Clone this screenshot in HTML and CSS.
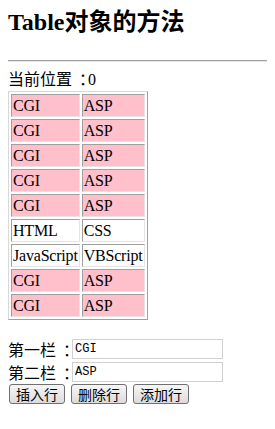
FILE: index.html
```html
<!DOCTYPE html>
<html lang="zh-CN">

<head>
    <meta charset="UTF-8">
    <meta name="viewport" content="width=device-width, initial-scale=1.0">
    <title>Table对象的方法</title>
    <link rel="stylesheet" href="styles.css">
</head>

<body>
    <h2 class="title">Table对象的方法</h2>
    <hr class="line">
    <div class="pos">当前位置<span class="colon">：</span>0</div>
    <table class="list" id="list">
        <tr class="pink"><td>CGI</td><td>ASP</td></tr>
        <tr class="pink"><td>CGI</td><td>ASP</td></tr>
        <tr class="pink"><td>CGI</td><td>ASP</td></tr>
        <tr class="pink"><td>CGI</td><td>ASP</td></tr>
        <tr class="pink"><td>CGI</td><td>ASP</td></tr>
        <tr><td>HTML</td><td>CSS</td></tr>
        <tr><td>JavaScript</td><td>VBScript</td></tr>
        <tr class="pink"><td>CGI</td><td>ASP</td></tr>
        <tr class="pink"><td>CGI</td><td>ASP</td></tr>
    </table>

    <form class="form">
        <div class="field">第一栏<span class="colon">：</span><input type="text" class="txt" value="CGI"></div>
        <div class="field">第二栏<span class="colon">：</span><input type="text" class="txt" value="ASP"></div>
        <div class="btns">
            <button type="button" class="btn">插入行</button>
            <button type="button" class="btn">删除行</button>
            <button type="button" class="btn">添加行</button>
        </div>
    </form>
</body>

</html>
```

FILE: styles.css
```css
body {
    margin: 8px;
    font-family: "Liberation Serif", "Noto Sans CJK SC", serif;
    font-size: 16px;
    color: #000;
    background: #fff;
}

.title {
    margin: 0 0 24px;
    font-size: 24px;
    line-height: 28px;
    font-weight: bold;
}

.line {
    margin: 0 -8px 0 0;
    height: 0;
    border: 0;
    border-top: 1px solid #a0a0a0;
    border-bottom: 1px solid #e4e4e4;
}

.pos {
    margin-top: 5px;
    line-height: 22px;
}

/* 全角冒号居中 */
.colon {
    font-family: "Noto Sans CJK SC", sans-serif;
    font-feature-settings: "halt";
    padding: 0 1px 0 7px;
}

.list {
    border-collapse: separate;
    border-spacing: 2px;
    border: 1px solid;
    border-color: #d8d8d8 #a0a0a0 #a0a0a0 #d8d8d8;
    letter-spacing: -0.2px;
}

.list td {
    padding: 1px;
    line-height: 19px;
    border: 1px solid;
    border-color: #a0a0a0 #e4e4e4 #e4e4e4 #a0a0a0;
}

.pink td {
    background: pink;
}

.form {
    margin-top: 18px;
}

.field {
    height: 23px;
    line-height: 23px;
    font-family: "Noto Sans CJK SC", sans-serif;
}

.txt {
    width: 145px;
    height: 16px;
    padding: 1px 2px;
    margin: 0;
    vertical-align: top;
    margin-top: 1px;
    border: 1px solid #d0d0d0;
    font-family: "Liberation Mono", monospace;
    font-size: 12px;
}

.btns {
    display: flex;
    gap: 6px;
    padding-left: 1px;
}

.btn {
    width: 56px;
    height: 20px;
    padding: 0;
    border: 1px solid #707070;
    border-radius: 3px;
    background: linear-gradient(#f6f6f6, #dcdcdc);
    font-family: "Noto Sans CJK SC", sans-serif;
    font-size: 14px;
    line-height: 17px;
    color: #000;
}
```
